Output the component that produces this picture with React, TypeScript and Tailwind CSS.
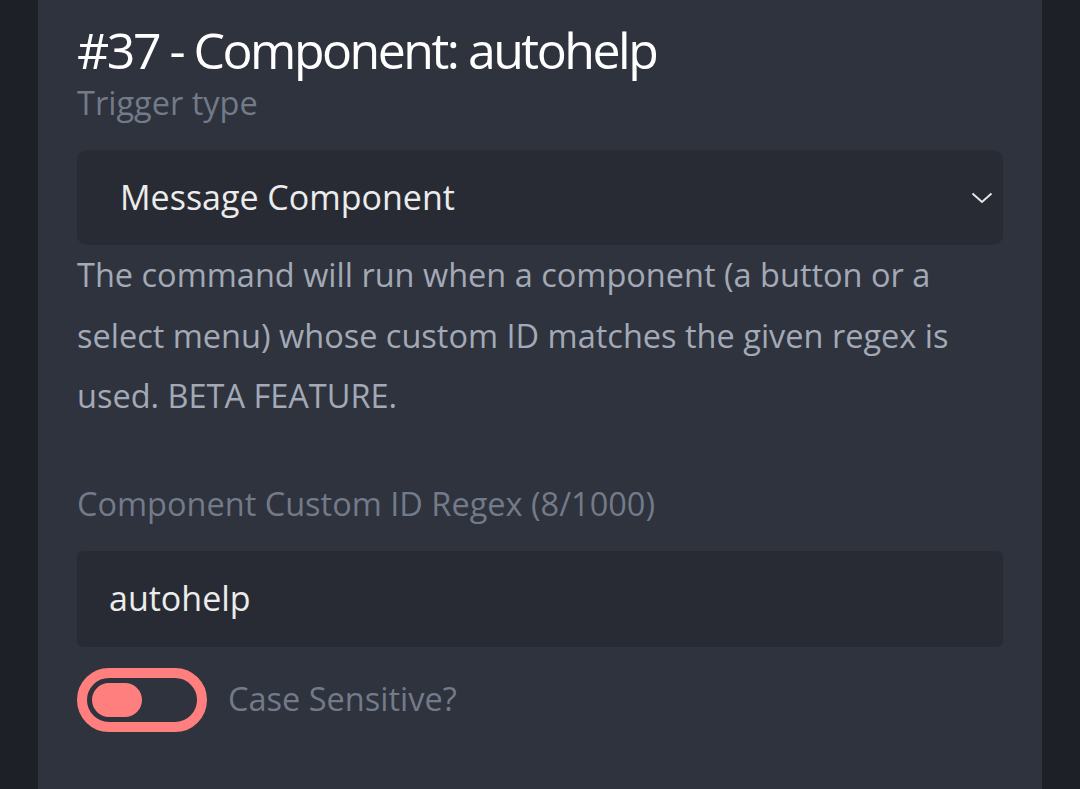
import React from "react";

export default function App() {
  return (
    <div
      className="w-[1080px] h-[789px] bg-[#1e2027] flex justify-center overflow-hidden"
      style={{ fontFamily: '"Open Sans", "Noto Sans", sans-serif' }}
    >
      <div className="w-[1004px] h-full bg-[#2e333d] px-[39px] pt-[20px]">
        <h1 className="text-[50px] leading-[60px] text-white tracking-[-2.5px] font-normal whitespace-nowrap">
          #37 - Component: autohelp
        </h1>
        <div className="text-[32.5px] leading-[40px] text-[#737a89] mt-[3px]">Trigger type</div>
        <div className="mt-[27px] h-[95px] rounded-[10px] bg-[#282b33] flex items-center justify-between pl-[43px] pr-[10px]">
          <span className="text-[34px] text-[#ececec]">Message Component</span>
          <svg width="22" height="14" viewBox="0 0 22 14">
            <path d="M1.5 2.5 L11 11 L20.5 2.5" fill="none" stroke="#e6e6e6" strokeWidth="2" />
          </svg>
        </div>
        <p className="mt-[0px] text-[32.5px] leading-[60.5px] text-[#a3a9b6]">
          The command will run when a component (a button or a select menu) whose custom ID matches the given regex is used. BETA FEATURE.
        </p>
        <div className="mt-[57px] text-[32.5px] leading-[40px] text-[#737a89] whitespace-nowrap">
          Component Custom ID Regex (8/1000)
        </div>
        <div className="mt-[27px] h-[96px] rounded-[6px] bg-[#282b33] flex items-center pl-[32px]">
          <span className="text-[34px] text-[#ececec]">autohelp</span>
        </div>
        <div className="mt-[21px] flex items-center gap-[21px]">
          <div className="w-[130px] h-[64px] rounded-full border-[10px] border-[#ff7f7f] flex items-center pl-[5px]">
            <div className="w-[50px] h-[34px] rounded-full bg-[#ff7f7f]" />
          </div>
          <span className="text-[32.5px] text-[#737a89]">Case Sensitive?</span>
        </div>
      </div>
    </div>
  );
}
